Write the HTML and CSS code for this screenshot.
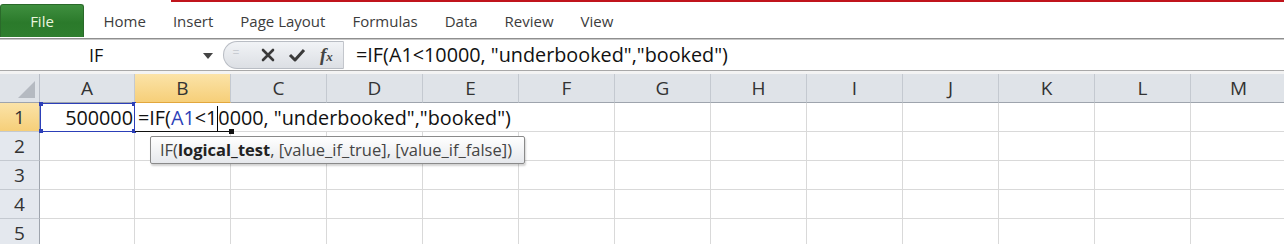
FILE: index.html
```html
<!DOCTYPE html>
<html lang="en">

<head>
    <meta charset="UTF-8">
    <title>Excel IF formula</title>
    <link rel="stylesheet" href="styles.css">
</head>

<body>
    <!-- Ribbon tabs -->
    <div class="ribbon">
        <div class="tab file-tab">File</div>
        <div class="tab">Home</div>
        <div class="tab">Insert</div>
        <div class="tab">Page Layout</div>
        <div class="tab">Formulas</div>
        <div class="tab">Data</div>
        <div class="tab">Review</div>
        <div class="tab">View</div>
        <div class="accent"></div>
    </div>

    <!-- Name box and formula bar -->
    <div class="formula-bar">
        <div class="name-box">
            <span class="name-text">IF</span>
            <span class="name-arrow"></span>
        </div>
        <div class="fx-buttons">
            <span class="grip">=</span>
            <svg class="icon" width="16" height="16" viewBox="0 0 16 16">
                <path d="M3 3 L13 13 M13 3 L3 13" stroke="#3a3a3a" stroke-width="2.6" stroke-linecap="round" />
            </svg>
            <svg class="icon" width="18" height="16" viewBox="0 0 18 16">
                <path d="M2 8 L7 13 L16 3" stroke="#3a3a3a" stroke-width="3" fill="none" stroke-linejoin="round" />
            </svg>
            <span class="fx">f<small>x</small></span>
        </div>
        <div class="formula-input">=IF(A1&lt;10000, "underbooked","booked")</div>
    </div>

    <div class="spacer"></div>

    <!-- Sheet grid -->
    <div class="sheet">
        <div class="corner"><span class="corner-tri"></span></div>
        <div class="col-head">A</div>
        <div class="col-head active">B</div>
        <div class="col-head">C</div>
        <div class="col-head">D</div>
        <div class="col-head">E</div>
        <div class="col-head">F</div>
        <div class="col-head">G</div>
        <div class="col-head">H</div>
        <div class="col-head">I</div>
        <div class="col-head">J</div>
        <div class="col-head">K</div>
        <div class="col-head">L</div>
        <div class="col-head">M</div>

        <div class="row-head active">1</div>
        <div class="cell ref-cell">
            500000
            <span class="handle tl"></span><span class="handle tr"></span>
            <span class="handle bl"></span><span class="handle br"></span>
        </div>
        <div class="cell edit-cell">
            <span class="edit-text">=IF(<span class="ref">A1</span>&lt;1<span class="caret"></span>0000, "underbooked","booked")</span>
            <span class="fill-handle"></span>
            <div class="tooltip">IF(<b>logical_test</b>, [value_if_true], [value_if_false])</div>
        </div>
        <div class="cell"></div>
        <div class="cell"></div>
        <div class="cell"></div>
        <div class="cell"></div>
        <div class="cell"></div>
        <div class="cell"></div>
        <div class="cell"></div>
        <div class="cell"></div>
        <div class="cell"></div>
        <div class="cell"></div>
        <div class="cell"></div>

        <div class="row-head">2</div>
        <div class="cell"></div><div class="cell"></div><div class="cell"></div><div class="cell"></div>
        <div class="cell"></div><div class="cell"></div><div class="cell"></div><div class="cell"></div>
        <div class="cell"></div><div class="cell"></div><div class="cell"></div><div class="cell"></div>
        <div class="cell"></div>

        <div class="row-head">3</div>
        <div class="cell"></div><div class="cell"></div><div class="cell"></div><div class="cell"></div>
        <div class="cell"></div><div class="cell"></div><div class="cell"></div><div class="cell"></div>
        <div class="cell"></div><div class="cell"></div><div class="cell"></div><div class="cell"></div>
        <div class="cell"></div>

        <div class="row-head">4</div>
        <div class="cell"></div><div class="cell"></div><div class="cell"></div><div class="cell"></div>
        <div class="cell"></div><div class="cell"></div><div class="cell"></div><div class="cell"></div>
        <div class="cell"></div><div class="cell"></div><div class="cell"></div><div class="cell"></div>
        <div class="cell"></div>

        <div class="row-head">5</div>
        <div class="cell"></div><div class="cell"></div><div class="cell"></div><div class="cell"></div>
        <div class="cell"></div><div class="cell"></div><div class="cell"></div><div class="cell"></div>
        <div class="cell"></div><div class="cell"></div><div class="cell"></div><div class="cell"></div>
        <div class="cell"></div>
    </div>
</body>

</html>
```

FILE: styles.css
```css
body {
    margin: 0;
    padding: 0;
    width: 1284px;
    height: 244px;
    overflow: hidden;
    background-color: #fff;
    font-family: "Open Sans", Arial, sans-serif;
}

/* Ribbon */
.ribbon {
    position: relative;
    display: flex;
    align-items: flex-end;
    height: 38px;
    border-bottom: 1px solid #8f8f8f;
    box-shadow: 0 1px 0 #c8c8c8;
    background-color: #fff;
}

.accent {
    position: absolute;
    top: 0;
    left: 171px;
    right: 0;
    height: 2px;
    background-color: #c0141c;
}

.tab {
    font-size: 15px;
    color: #3c3c3c;
    padding: 0 13.5px 7px;
}

.tab:nth-child(2) {
    margin-left: 6px;
}

.file-tab {
    width: 84px;
    height: 33px;
    box-sizing: border-box;
    padding: 0;
    line-height: 33px;
    text-align: center;
    color: #eaf6df;
    background: linear-gradient(#3f8f3f, #2b7a2b 55%, #2e7e2e);
    border: 1px solid #2a6a2a;
    border-bottom: none;
    border-radius: 3px 3px 0 0;
    margin-bottom: 1px;
}

/* Formula bar */
.formula-bar {
    display: flex;
    height: 30px;
    margin-top: 1px;
    border-bottom: 1px solid #a8a8a8;
}

.name-box {
    width: 223px;
    display: flex;
    align-items: center;
    position: relative;
}

.name-text {
    font-size: 18px;
    margin-left: 89px;
    color: #111;
}

.name-arrow {
    position: absolute;
    left: 203px;
    top: 13px;
    border-left: 5px solid transparent;
    border-right: 5px solid transparent;
    border-top: 6px solid #444;
}

.fx-buttons {
    width: 119px;
    display: flex;
    align-items: center;
    background: linear-gradient(#f1f3f6, #dcdfe4);
    border: 1px solid #b9bdc4;
    border-right: 1px solid #c3c6cc;
    border-radius: 15px 0 0 15px;
    margin: 1px 0;
}

.grip {
    width: 14px;
    height: 22px;
    margin-left: 5px;
    color: #c8ccd2;
    font-size: 12px;
    line-height: 18px;
    text-align: center;
}

.icon {
    margin-left: 17px;
}

.icon + .icon {
    margin-left: 12px;
}

.fx {
    margin-left: 14px;
    font-family: "Liberation Serif", serif;
    font-style: italic;
    font-weight: bold;
    font-size: 19px;
    color: #444;
}

.fx small {
    font-size: 13px;
}

.formula-input {
    flex: 1;
    font-size: 19.8px;
    line-height: 30px;
    padding-left: 12px;
    color: #111;
}

.spacer {
    height: 3px;
    background-color: #f3f3f3;
}

/* Sheet */
.sheet {
    display: grid;
    grid-template-columns: 40px 95px repeat(12, 96px);
    grid-template-rows: repeat(6, 29px);
}

.corner {
    background-color: #dfe3e8;
    border-right: 1px solid #b9bec7;
    border-bottom: 1px solid #9ea4ad;
    position: relative;
}

.corner-tri {
    position: absolute;
    right: 4px;
    bottom: 4px;
    border-left: 17px solid transparent;
    border-bottom: 17px solid #b5bac1;
}

.col-head {
    background-color: #dfe3e8;
    border-right: 1px solid #c4c9d0;
    border-bottom: 1px solid #9ea4ad;
    text-align: center;
    font-size: 19px;
    line-height: 29px;
    color: #333;
}

.col-head.active {
    background: linear-gradient(#fbe3a8, #f6cf79);
    border-bottom-color: #e2a73d;
}

.row-head {
    background-color: #e4e8ee;
    border-right: 1px solid #9ea4ad;
    border-bottom: 1px solid #c4c9d0;
    text-align: center;
    font-size: 19px;
    line-height: 29px;
    color: #333;
}

.row-head.active {
    background: linear-gradient(#fbe3a8, #f6cf79);
}

.cell {
    border-right: 1px solid #d9d9d9;
    border-bottom: 1px solid #d9d9d9;
    font-size: 19.8px;
    line-height: 29px;
}

.ref-cell {
    box-sizing: border-box;
    border: 1px solid #2c3fb8;
    text-align: right;
    padding-right: 1px;
    line-height: 27px;
    color: #111;
    position: relative;
}

.handle {
    position: absolute;
    width: 4px;
    height: 4px;
    background-color: #2c3fb8;
}

.handle.tl { left: -2px; top: -2px; }
.handle.tr { right: -2px; top: -2px; }
.handle.bl { left: -2px; bottom: -2px; }
.handle.br { right: -2px; bottom: -2px; }

.edit-cell {
    position: relative;
    border-bottom: 2px solid #111;
    z-index: 2;
}

.edit-text {
    position: absolute;
    left: 0;
    top: 0;
    height: 28px;
    padding-left: 3px;
    width: 382px;
    background-color: #fff;
    white-space: nowrap;
    color: #111;
}

.fill-handle {
    position: absolute;
    right: -4px;
    bottom: -4px;
    width: 5px;
    height: 5px;
    background-color: #111;
}

.ref {
    color: #2c3fb8;
}

.caret {
    display: inline-block;
    width: 1px;
    height: 25px;
    vertical-align: -6px;
    background-color: #000;
}

.tooltip {
    position: absolute;
    left: 15px;
    top: 33px;
    width: 375px;
    height: 28px;
    box-sizing: border-box;
    padding-left: 9px;
    font-size: 16.5px;
    line-height: 26px;
    color: #444;
    white-space: nowrap;
    background: linear-gradient(#ffffff, #e6e8ec);
    border: 1px solid #8a8a8a;
    border-radius: 2px;
    box-shadow: 1px 2px 2px rgba(0, 0, 0, 0.18);
}

.tooltip b {
    color: #222;
}
```
